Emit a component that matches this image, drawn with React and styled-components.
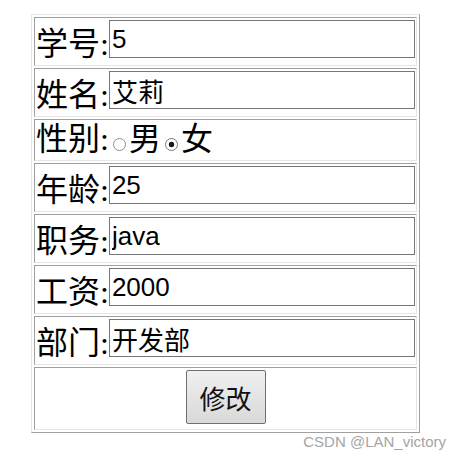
import React, { useState } from 'react';
import styled, { createGlobalStyle } from 'styled-components';

const GlobalStyle = createGlobalStyle`
  body {
    margin: 0;
    background: #fff;
  }
`;

const Page = styled.div`
  width: 463px;
  padding: 14px 0 0 31px;
  box-sizing: border-box;
  font-family: "Liberation Serif", "Noto Sans CJK SC", serif;
`;

const FormTable = styled.table`
  width: 389px;
  table-layout: fixed;
  border-collapse: separate;
  border-spacing: 2px;
  border: 1px solid;
  border-color: #e6e6e6 #a0a0a0 #a0a0a0 #e6e6e6;
`;

const Cell = styled.td`
  border: 1px solid;
  border-color: #a0a0a0 #e6e6e6 #e6e6e6 #a0a0a0;
  padding: 1px;
  vertical-align: top;
`;

const Field = styled.div`
  display: flex;
  align-items: flex-start;
  justify-content: ${({ $center }) => ($center ? 'center' : 'flex-start')};
  height: ${({ $h }) => $h}px;
`;

const Label = styled.span`
  font-size: 32px;
  line-height: 36px;
  margin-top: ${({ $offset }) => $offset}px;
  color: #000;
  white-space: nowrap;
`;

const TextInput = styled.input`
  flex: 1;
  width: 0;
  min-width: 0;
  height: 38px;
  margin: 1px 0 0 0;
  padding: 0 2px;
  box-sizing: border-box;
  border: 1px solid #767676;
  font-family: "Liberation Sans", "Noto Sans CJK SC", sans-serif;
  font-size: 26px;
  color: #000;
  background: #fff;
  outline: none;
`;

const Radio = styled.input.attrs({ type: 'radio' })`
  appearance: none;
  flex: none;
  width: 13px;
  height: 13px;
  margin: 17px 3px 0 4px;
  border: 1px solid #8f8f8f;
  border-radius: 50%;
  box-sizing: border-box;
  background: #fff;

  &:checked {
    border-color: #7a7a7a;
    background: radial-gradient(circle, #1a1a1a 0 2.5px, #fff 3.1px);
  }
`;

const Choice = styled.span`
  font-size: 32px;
  line-height: 36px;
  color: #000;
`;

const SubmitButton = styled.button`
  width: 80px;
  height: 54px;
  margin-top: 1px;
  padding: 0;
  border: 1px solid #707070;
  border-radius: 2px;
  background: linear-gradient(#f0f0f0, #e4e4e4 50%, #d9d9d9);
  font-family: "Noto Sans CJK SC", sans-serif;
  font-size: 26px;
  color: #111;
  cursor: pointer;
`;

const Watermark = styled.div`
  margin-top: 0;
  padding-right: 17px;
  text-align: right;
  font-family: "Liberation Sans", sans-serif;
  font-size: 15px;
  line-height: 17px;
  color: #a5a5a5;
`;

const fields = [
  { key: 'id', label: '学号:', value: '5' },
  { key: 'name', label: '姓名:', value: '艾莉' },
  { key: 'sex', label: '性别:' },
  { key: 'age', label: '年龄:', value: '25' },
  { key: 'job', label: '职务:', value: 'java' },
  { key: 'salary', label: '工资:', value: '2000' },
  { key: 'dept', label: '部门:', value: '开发部' },
];

const App = () => {
  const [form, setForm] = useState(
    Object.fromEntries(fields.filter((f) => f.value !== undefined).map((f) => [f.key, f.value]))
  );
  const [sex, setSex] = useState('女');

  return (
    <Page>
      <GlobalStyle />
      <FormTable>
        <tbody>
          {fields.map((f) => (
            <tr key={f.key}>
              <Cell>
                {f.key === 'sex' ? (
                  <Field $h={38}>
                    <Label $offset={0}>{f.label}</Label>
                    <Radio name="sex" checked={sex === '男'} onChange={() => setSex('男')} />
                    <Choice>男</Choice>
                    <Radio name="sex" checked={sex === '女'} onChange={() => setSex('女')} />
                    <Choice>女</Choice>
                  </Field>
                ) : (
                  <Field $h={45}>
                    <Label $offset={7}>{f.label}</Label>
                    <TextInput
                      value={form[f.key]}
                      onChange={(e) => setForm({ ...form, [f.key]: e.target.value })}
                    />
                  </Field>
                )}
              </Cell>
            </tr>
          ))}
          <tr>
            <Cell>
              <Field $h={59} $center>
                <SubmitButton type="button">修改</SubmitButton>
              </Field>
            </Cell>
          </tr>
        </tbody>
      </FormTable>
      <Watermark>CSDN @LAN_victory</Watermark>
    </Page>
  );
};

export default App;
